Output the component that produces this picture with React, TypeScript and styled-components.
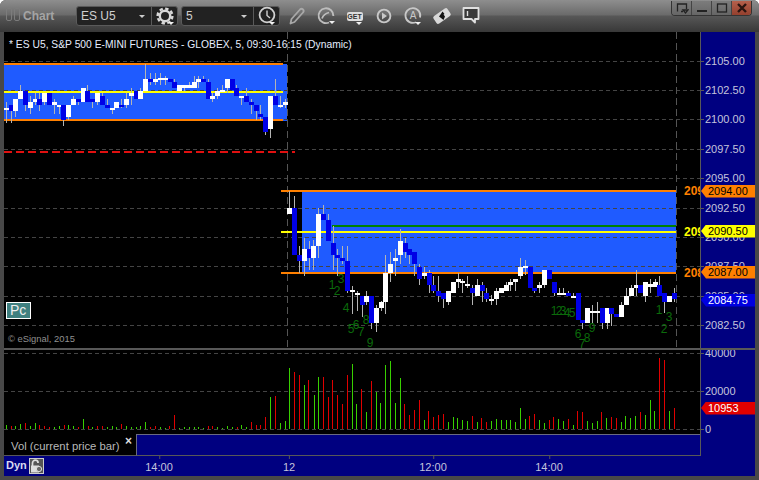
import React from 'react';
import styled, { createGlobalStyle } from 'styled-components';

const GlobalStyle = createGlobalStyle`
  html, body { margin: 0; padding: 0; background: #fff; }
  body { font-family: "Liberation Sans", Arial, sans-serif; }
`;

// [x, bodyTop, bodyBottom, wickTop, wickBottom, up] sampled at 3x from the chart
type Bar = [number, number, number, number, number, number];

const SESSION_1: Bar[] = [
  [18,158,165,140,203,1],[32,150,168,150,203,0],[46,132,168,132,185,1],[61,108,132,90,132,1],[76,108,150,108,168,0],
  [91,141,159,123,177,1],[104,132,141,113,150,1],[118,132,150,113,168,0],[133,114,141,114,150,1],[148,114,150,114,150,0],
  [163,141,150,132,177,1],[176,150,155,150,177,1],[190,150,195,150,212,0],[205,150,186,150,195,1],[220,132,150,123,150,1],
  [234,132,141,132,150,0],[248,99,141,99,141,1],[262,108,141,90,141,0],[277,132,141,132,159,0],[292,114,141,114,150,1],
  [307,123,150,114,150,0],[322,150,159,132,159,0],[335,159,164,159,177,1],[349,141,159,141,159,1],[364,150,152,132,159,0],
  [379,132,150,114,159,1],[393,114,123,99,150,1],[407,108,132,108,132,0],[421,108,132,99,132,1],[436,72,108,28,108,1],
  [451,72,81,54,90,0],[465,72,81,54,90,1],[479,69,75,54,90,1],[494,69,75,63,90,1],[509,72,81,72,81,0],
  [523,81,99,72,99,0],[538,90,108,90,108,1],[552,90,99,90,108,1],[567,90,99,81,99,1],[581,81,99,63,99,1],
  [595,72,81,63,99,1],[610,72,81,63,81,0],[623,81,132,72,132,0],[637,123,132,114,141,1],[652,108,123,99,132,1],
  [667,105,110,90,110,1],[681,72,99,72,114,1],[695,72,105,72,105,0],[709,99,123,90,123,0],[724,123,129,123,150,1],
  [739,123,141,99,141,0],[754,141,150,132,177,0],[767,150,168,150,195,0],[781,177,186,150,195,0],[796,186,231,186,240,0],
  [811,123,222,123,249,1],[826,123,150,72,150,0],[841,150,156,123,159,1],[854,141,150,132,159,1],
];

const SESSION_2: Bar[] = [
  [28,84,102,33,102,1],[43,84,225,48,225,0],[58,225,243,198,279,0],[72,207,243,174,288,1],[86,207,234,183,270,0],
  [100,198,234,180,270,1],[115,102,198,84,234,1],[130,102,120,75,120,0],[145,120,183,102,183,0],[158,189,225,138,270,0],
  [172,225,234,207,288,0],[187,234,243,198,252,0],[202,243,333,198,339,0],[217,330,335,318,402,1],[230,339,345,333,393,1],
  [245,348,375,348,411,0],[259,348,366,333,375,1],[274,348,429,348,447,0],[289,384,429,375,456,1],[302,366,384,363,393,1],
  [316,279,366,225,402,1],[331,252,279,216,306,1],[346,234,243,207,288,1],[361,183,225,147,252,1],[374,189,216,174,234,0],
  [388,207,225,207,252,0],[403,216,252,216,288,0],[418,261,297,252,315,0],[432,279,288,261,297,1],[446,279,315,270,339,0],
  [460,315,333,288,339,0],[475,333,348,288,366,0],[490,339,357,339,384,0],[505,333,366,333,375,1],[520,306,339,306,339,1],
  [533,297,306,279,324,1],[547,303,309,297,339,1],[562,312,318,288,324,1],[577,324,339,315,375,0],[591,315,348,297,348,1],
  [605,315,333,306,366,0],[619,339,357,324,366,0],[634,357,362,345,375,1],[649,333,357,324,375,1],[663,324,339,324,339,1],
  [677,315,333,306,333,1],[691,306,315,297,333,1],[706,297,306,297,333,1],
];

const SESSION_3: Bar[] = [
  [31,261,288,234,297,1],[45,258,264,240,285,1],[59,261,324,261,324,0],[73,324,333,324,339,0],[88,315,324,306,339,1],
  [103,270,315,270,324,1],[118,270,297,270,297,0],[131,306,339,306,348,0],[146,339,345,324,345,1],[160,339,345,324,345,1],
  [175,339,347,333,347,0],[189,348,354,340,354,1],[203,339,420,339,420,0],[217,420,429,420,447,0],[232,384,429,384,429,1],
  [247,393,400,375,429,1],[262,393,400,366,429,1],[275,384,429,384,447,0],[290,384,429,384,447,1],[304,384,402,384,438,0],
  [319,402,411,402,411,0],[334,375,411,366,411,1],[347,348,375,325,375,1],[362,324,348,315,348,1],[377,315,324,270,348,1],
  [391,315,339,315,339,0],[406,306,348,306,366,1],[420,312,322,297,339,1],[434,306,322,297,322,1],[448,315,348,288,348,0],
  [463,339,366,339,400,0],[478,348,366,348,366,1],[493,339,357,324,366,0],
];

// [x, top] at 3x, baseline is 252, g is an up bar
const VOLUME: [number, number, 'g' | 'r'][] = [
  [19,240,'g'],[32,243,'r'],[46,243,'g'],[61,237,'g'],[76,234,'r'],[90,243,'g'],[104,234,'g'],[118,240,'r'],[133,243,'r'],[148,246,'r'],
  [163,246,'g'],[177,243,'g'],[191,240,'r'],[205,240,'g'],[220,243,'g'],[235,246,'r'],[248,222,'g'],[263,243,'r'],[277,246,'g'],[292,243,'r'],
  [307,243,'r'],[321,246,'g'],[335,243,'g'],[349,246,'g'],[364,237,'r'],[379,243,'g'],[393,246,'g'],[407,246,'g'],[421,243,'g'],[436,231,'g'],
  [451,246,'r'],[465,243,'r'],[479,246,'g'],[494,249,'g'],[508,243,'r'],[523,210,'r'],[538,249,'g'],[552,246,'g'],[566,246,'g'],[581,246,'g'],
  [595,246,'g'],[609,249,'g'],[623,243,'r'],[637,243,'r'],[652,246,'g'],[667,249,'g'],[682,243,'g'],[696,246,'g'],[710,246,'r'],[724,240,'g'],
  [739,246,'g'],[754,231,'r'],[767,240,'r'],[781,240,'r'],[796,216,'r'],[811,156,'g'],[826,153,'r'],[841,234,'g'],[854,228,'g'],[868,69,'g'],
  [883,81,'r'],[898,90,'r'],[913,120,'g'],[925,105,'r'],[941,150,'g'],[955,96,'g'],[970,96,'r'],[985,156,'r'],[997,105,'r'],[1012,150,'r'],
  [1027,177,'r'],[1042,90,'r'],[1056,57,'g'],[1069,177,'g'],[1084,132,'r'],[1099,201,'g'],[1114,108,'r'],[1129,141,'g'],
  [1141,174,'g'],[1156,60,'g'],[1171,48,'g'],[1186,174,'g'],[1201,99,'g'],[1213,177,'r'],[1228,210,'r'],[1243,195,'r'],[1258,165,'r'],[1273,225,'g'],
  [1285,198,'r'],[1300,216,'r'],[1315,210,'r'],[1330,207,'r'],[1345,231,'g'],[1360,216,'g'],[1372,219,'g'],[1387,225,'g'],[1402,228,'g'],[1417,213,'r'],
  [1432,231,'g'],[1444,219,'r'],[1459,231,'r'],[1474,228,'g'],[1489,222,'g'],[1504,225,'g'],[1517,225,'g'],[1531,225,'g'],[1546,231,'g'],[1561,189,'g'],
  [1576,222,'g'],[1588,213,'r'],[1603,207,'r'],[1618,225,'g'],[1633,234,'g'],[1648,225,'r'],[1660,216,'r'],[1675,222,'g'],[1690,228,'g'],[1705,222,'r'],
  [1720,240,'g'],[1732,198,'r'],[1747,201,'r'],[1762,228,'g'],[1777,234,'g'],[1792,228,'g'],[1804,201,'r'],[1819,219,'g'],[1834,216,'r'],[1849,219,'r'],
  [1864,231,'g'],[1876,213,'g'],[1891,219,'g'],[1906,213,'g'],[1921,201,'r'],[1936,210,'g'],[1951,165,'g'],[1963,198,'g'],[1978,39,'r'],[1993,45,'r'],
  [2008,198,'g'],[2023,189,'r'],
];

// sequence counts printed under the bars, page coordinates
const COUNTS: [string, number, number][] = [
  ['1',332,285],['2',337,291],['3',341,279],['4',346,308],['5',351,329],['6',356,325],['7',361,332],['8',366,320],['9',370,343],
  ['1',554,311],['2',559,311],['3',563,311],['4',567,313],['5',572,313],['6',578,334],['7',582,344],['8',587,338],['9',592,328],
  ['1',659,310],['3',669,317],['2',664,329],
];

const GRID_Y = [61, 90, 119, 149, 178, 208, 237, 266, 296, 325];
const PRICES = ['2105.00','2102.50','2100.00','2097.50','2095.00','2092.50','2090.00','2087.50','2085.00','2082.50'];
const BADGES = [
  { y: 191, text: '2094.00', bg: '#ff8000', fg: '#000' },
  { y: 231, text: '2090.50', bg: '#ffff00', fg: '#000' },
  { y: 272, text: '2087.00', bg: '#ff8000', fg: '#000' },
  { y: 300, text: '2084.75', bg: '#0000e0', fg: '#fff' },
];
const PRICE_TOP = 32;
const VOLUME_TOP = 350;

const Candles = ({ bars, ox, oy }: { bars: Bar[]; ox: number; oy: number }) => (
  <>
    {bars.map(([x, top, bottom, wickTop, wickBottom, up]) => {
      const cx = Math.round(ox + x / 3);
      const by = Math.round(oy + top / 3);
      return (
        <g key={x}>
          <rect x={cx} y={oy + wickTop / 3} width={1} height={(wickBottom - wickTop) / 3} fill="#b4b4b4" />
          <rect x={cx - 2} y={by} width={5} height={Math.max(2, Math.round(oy + bottom / 3) - by)} fill={up ? '#fff' : '#0000e6'} />
        </g>
      );
    })}
  </>
);

const PriceChart = () => (
  <ChartSvg viewBox="4 32 696 316" shapeRendering="crispEdges">
    <rect x={4} y={64} width={283} height={57} fill="#1f5bff" />
    <rect x={302} y={192} width={374} height={80} fill="#1f5bff" />
    {GRID_Y.map((y) => (
      <line key={y} x1={4} x2={700} y1={y + 0.5} y2={y + 0.5} stroke="#444" strokeDasharray="4 3" />
    ))}
    <line x1={287.5} x2={287.5} y1={32} y2={348} stroke="#555" strokeDasharray="7 4" />
    <line x1={676.5} x2={676.5} y1={32} y2={348} stroke="#555" strokeDasharray="7 4" />
    <rect x={4} y={63} width={279} height={2} fill="#ff8000" />
    <rect x={4} y={91} width={279} height={2} fill="#ffff00" />
    <rect x={4} y={119} width={279} height={2} fill="#ff8000" />
    <line x1={4} x2={295} y1={152} y2={152} stroke="#e01010" strokeWidth={2} strokeDasharray="8 4" />
    <rect x={281} y={190} width={395} height={2} fill="#ff8000" />
    <rect x={332} y={225} width={344} height={2} fill="#008000" />
    <rect x={281} y={231} width={395} height={2} fill="#ffff00" />
    <rect x={281} y={272} width={395} height={2} fill="#ff8000" />
    <Candles bars={SESSION_1} ox={0} oy={55} />
    <Candles bars={SESSION_2} ox={280} oy={180} />
    <Candles bars={SESSION_3} ox={510} oy={180} />
    {COUNTS.map(([n, x, y], i) => (
      <CountText key={i} x={x} y={y}>{n}</CountText>
    ))}
    <LevelText x={684} y={195} fill="#ff8000">209</LevelText>
    <LevelText x={684} y={236} fill="#ffff00">209</LevelText>
    <LevelText x={684} y={277} fill="#ff8000">208</LevelText>
  </ChartSvg>
);

const VolumeChart = () => (
  <ChartSvg viewBox="4 350 696 84" shapeRendering="crispEdges">
    {[353, 391, 429].map((y) => (
      <line key={y} x1={4} x2={700} y1={y + 0.5} y2={y + 0.5} stroke="#444" strokeDasharray="4 3" />
    ))}
    {VOLUME.map(([x, top, c]) => {
      const y = Math.round(345 + top / 3);
      return <rect key={x} x={Math.round(x / 3)} y={y} width={1} height={429 - y} fill={c === 'g' ? '#38d000' : '#e00000'} />;
    })}
  </ChartSvg>
);

const Caret = () => <path d="M0 0h6l-3 3z" fill="#f0f0f0" />;

const GearIcon = () => (
  <ToolSvg width={22} height={22} viewBox="0 0 22 22">
    <circle cx={11} cy={11} r={7.4} fill="none" stroke="#d8d8d8" strokeWidth={2.4} strokeDasharray="3.4 2.4" />
    <circle cx={11} cy={11} r={5.2} fill="none" stroke="#d8d8d8" strokeWidth={2.4} />
    <g transform="translate(14 17)"><Caret /></g>
  </ToolSvg>
);

const ClockIcon = () => (
  <ToolSvg width={22} height={22} viewBox="0 0 22 22">
    <circle cx={11} cy={10} r={7.4} fill="none" stroke="#d0d0d0" strokeWidth={1.8} />
    <path d="M11 5.5V10.5l3 2.5" fill="none" stroke="#d0d0d0" strokeWidth={1.4} />
    <g transform="translate(13 17)"><Caret /></g>
  </ToolSvg>
);

const PencilIcon = () => (
  <ToolSvg width={20} height={22} viewBox="0 0 20 22">
    <path d="M3.5 18.5l1-4.5L13 4.5c1-1 2-1 3 0s1 2 0 3L7.5 17z" fill="none" stroke="#a8a8a8" strokeWidth={1.8} strokeLinejoin="round" />
  </ToolSvg>
);

const GaugeIcon = () => (
  <ToolSvg width={22} height={22} viewBox="0 0 22 22">
    <path d="M14 17.5A7.4 7.4 0 1 1 18.4 11" fill="none" stroke="#bdbdbd" strokeWidth={1.9} />
    <path d="M7 13.5c1-3 3-5 7-6" fill="none" stroke="#bdbdbd" strokeWidth={1.8} />
    <g transform="translate(14 16)"><Caret /></g>
  </ToolSvg>
);

const GetIcon = () => (
  <GetBox>
    GET
    <svg width={6} height={3} viewBox="0 0 6 3"><Caret /></svg>
  </GetBox>
);

const PlayIcon = () => (
  <ToolSvg width={20} height={22} viewBox="0 0 20 22">
    <circle cx={10} cy={11} r={6.4} fill="none" stroke="#c8c8c8" strokeWidth={1.9} />
    <path d="M8 7.5l5 3.5-5 3.5z" fill="#c8c8c8" />
  </ToolSvg>
);

const AutoIcon = () => (
  <ToolSvg width={22} height={22} viewBox="0 0 22 22">
    <path d="M14 17.2A7.4 7.4 0 1 1 18 12.5" fill="none" stroke="#c8c8c8" strokeWidth={1.8} />
    <IconLetter x={11} y={14}>A</IconLetter>
    <g transform="translate(13 17)"><Caret /></g>
  </ToolSvg>
);

const DiamondIcon = () => (
  <ToolSvg width={20} height={22} viewBox="0 0 20 22">
    <rect x={1.5} y={6.5} width={17} height={9} rx={2} fill="#d8d8d8" transform="rotate(-35 10 11)" />
    <path d="M10.5 6.5l2 2.5-1 .5 1.5 2-1.5 3.5-2.5-2-2-1.5L8.5 9.5z" fill="#111" />
  </ToolSvg>
);

const BubbleIcon = () => (
  <ToolSvg width={18} height={20} viewBox="0 0 18 20">
    <path d="M1.5 2h15v11h-3.5v3.5l-3.5-3.5h-8z" fill="#3a3a3a" stroke="#e0e0e0" strokeWidth={1.8} strokeLinejoin="round" />
    <path d="M5.5 5v5" stroke="#e0e0e0" strokeWidth={1.4} />
  </ToolSvg>
);

const LockIcon = () => (
  <svg width={13} height={14} viewBox="0 0 13 14">
    <path d="M2.5 7V4a2.8 2.8 0 0 1 5.6 0" fill="none" stroke="#ddd" strokeWidth={1.7} />
    <rect x={1} y={6.5} width={8} height={7} fill="#ddd" />
    <circle cx={9} cy={10} r={2.6} fill="#666" stroke="#ddd" />
  </svg>
);

const TOOLS = [PencilIcon, GaugeIcon, GetIcon, PlayIcon, AutoIcon, DiamondIcon, BubbleIcon];

const App = () => (
  <Window>
    <GlobalStyle />
    <TitleBar>
      <Grip><GripBar /><GripBar /></Grip>
      <ChartName>Chart</ChartName>
      <Selector>
        <SelectorValue $width={75}>ES U5<SelectCaret /></SelectorValue>
        <SelectorButton><GearIcon /></SelectorButton>
      </Selector>
      <Selector>
        <SelectorValue $width={72}>5<SelectCaret /></SelectorValue>
        <SelectorButton><ClockIcon /></SelectorButton>
      </Selector>
      <ToolGroup>
        {TOOLS.map((Tool, i) => (
          <ToolSlot key={i}><Tool /></ToolSlot>
        ))}
      </ToolGroup>
      <WindowButtons>
        <WindowButton>
          <svg width={14} height={12} viewBox="0 0 14 12"><path d="M2.5 9.5V2h9v5M6 9.5h2M8 8h5l-2.5 3z" fill="none" stroke="#222" strokeWidth={1.3} /></svg>
        </WindowButton>
        <WindowButton>
          <svg width={12} height={12} viewBox="0 0 12 12"><rect x={1} y={8} width={10} height={2} fill="#222" /></svg>
        </WindowButton>
        <WindowButton>
          <svg width={12} height={12} viewBox="0 0 12 12"><rect x={1.5} y={2} width={9} height={8} fill="none" stroke="#222" strokeWidth={1.3} /></svg>
        </WindowButton>
        <CloseButton>
          <svg width={12} height={12} viewBox="0 0 12 12"><path d="M2 2l8 8M10 2l-8 8" stroke="#2a1410" strokeWidth={2.4} /></svg>
        </CloseButton>
      </WindowButtons>
    </TitleBar>

    <PriceRow>
      <Plot>
        <PriceChart />
        <ChartTitle>* ES U5, S&amp;P 500 E-MINI FUTURES - GLOBEX, 5, 09:30-16:15 (Dynamic)</ChartTitle>
        <PcBadge>Pc</PcBadge>
        <Copyright>© eSignal, 2015</Copyright>
      </Plot>
      <Axis>
        {PRICES.map((p, i) => (
          <AxisLabel key={p} $y={GRID_Y[i] - PRICE_TOP}>{p}</AxisLabel>
        ))}
        {BADGES.map((b) => (
          <PriceBadge key={b.text} $y={b.y - PRICE_TOP} $bg={b.bg} $fg={b.fg}>{b.text}</PriceBadge>
        ))}
      </Axis>
    </PriceRow>

    <VolumeRow>
      <Plot>
        <VolumeChart />
      </Plot>
      <Axis>
        <AxisLabel $y={353 - VOLUME_TOP}>40000</AxisLabel>
        <AxisLabel $y={391 - VOLUME_TOP}>20000</AxisLabel>
        <AxisLabel $y={429 - VOLUME_TOP}>0</AxisLabel>
        <PriceBadge $y={408 - VOLUME_TOP} $bg="#e00000" $fg="#fff">10953</PriceBadge>
      </Axis>
    </VolumeRow>

    <LegendRow>
      <LegendTab>
        Vol (current price bar)
        <LegendClose>×</LegendClose>
      </LegendTab>
      <LegendFill />
      <AxisSpacer />
    </LegendRow>

    <TimeRow>
      <DynLabel>Dyn</DynLabel>
      <LockButton><LockIcon /></LockButton>
      {[['14:00', 159], ['12', 289], ['12:00', 433], ['14:00', 549]].map(([t, x]) => (
        <TimeLabel key={x} $x={Number(x) - 4}>{t}</TimeLabel>
      ))}
    </TimeRow>
  </Window>
);

export default App;

const Window = styled.div`
  width: 759px;
  height: 480px;
  box-sizing: border-box;
  padding: 0 4px 4px;
  display: flex;
  flex-direction: column;
  overflow: hidden;
  background: #484848;
  border-radius: 6px 6px 0 0;
  font-size: 11px;
  color: #c4c4dc;
`;

const TitleBar = styled.div`
  height: 32px;
  flex: none;
  margin: 0 -4px;
  padding: 6px 0 0 6px;
  box-sizing: border-box;
  display: flex;
  align-items: flex-start;
  position: relative;
  background: linear-gradient(#8e8e8e 0, #6a6a6a 15px, #575757 16px, #383838 32px);
`;

const Grip = styled.div`
  display: flex;
  gap: 2px;
  margin-top: 2px;
`;

const GripBar = styled.div`
  width: 6px;
  height: 13px;
  box-sizing: border-box;
  border: 1px solid #7c7c7c;
  border-radius: 2px;
`;

const ChartName = styled.div`
  width: 56px;
  padding: 3px 0 0 3px;
  box-sizing: border-box;
  font-size: 12px;
  font-weight: bold;
  color: #a4a4a4;
`;

const Selector = styled.div`
  height: 20px;
  display: flex;
  margin-right: 3px;
  box-sizing: border-box;
  border: 1px solid #5a5a5a;
  border-radius: 3px;
  background: #222;

  & + & {
    margin-right: 2px;
  }
`;

const SelectorValue = styled.div<{ $width: number }>`
  width: ${(p) => p.$width}px;
  box-sizing: border-box;
  padding-left: 4px;
  display: flex;
  align-items: center;
  justify-content: space-between;
  font-size: 12px;
  color: #d0d0d0;
  border-right: 1px solid #5a5a5a;
`;

const SelectCaret = styled.span`
  width: 0;
  height: 0;
  margin-right: 6px;
  border: 3px solid transparent;
  border-top: 3px solid #ccc;
  border-bottom: 0;
`;

const SelectorButton = styled.div`
  width: 25px;
  display: flex;
  align-items: center;
  justify-content: center;
`;

const ToolSvg = styled.svg`
  display: block;
  flex: none;
`;

const ToolGroup = styled.div`
  display: flex;
  margin-top: -1px;
  height: 22px;
`;

const ToolSlot = styled.div`
  width: 29px;
  display: flex;
  align-items: center;
  justify-content: center;
`;

const GetBox = styled.div`
  width: 16px;
  height: 9px;
  position: relative;
  display: flex;
  justify-content: center;
  border-radius: 2px;
  background: #ddd;
  color: #333;
  font: bold 7px/9px "Liberation Sans", sans-serif;

  svg {
    position: absolute;
    right: 1px;
    bottom: -4px;
  }
`;

const IconLetter = styled.text`
  font-size: 10px;
  fill: #c8c8c8;
  text-anchor: middle;
`;

const WindowButtons = styled.div`
  position: absolute;
  top: 1px;
  right: 7px;
  display: flex;
  height: 14px;
  border: 1px solid #333;
  border-top: 0;
  border-radius: 0 0 4px 4px;
  overflow: hidden;
  background: #777;
`;

const WindowButton = styled.div`
  width: 19px;
  display: flex;
  align-items: center;
  justify-content: center;
  border-right: 1px solid #444;
  background: linear-gradient(#7c7c7c, #666);
`;

const CloseButton = styled(WindowButton)`
  border-right: 0;
  background: linear-gradient(#b5604c, #94402e);
`;

const PriceRow = styled.div`
  height: 318px;
  flex: none;
  display: flex;
  box-sizing: border-box;
  border-bottom: 2px solid #585858;
`;

const VolumeRow = styled.div`
  height: 84px;
  flex: none;
  display: flex;
`;

const Plot = styled.div`
  width: 696px;
  flex: none;
  position: relative;
  background: #000;
`;

const ChartSvg = styled.svg`
  display: block;
  width: 100%;
  height: 100%;
`;

const CountText = styled.text`
  font-size: 12px;
  fill: #0b6b0b;
  text-anchor: middle;
  dominant-baseline: central;
`;

const LevelText = styled.text`
  font-size: 12px;
  font-weight: bold;
`;

const ChartTitle = styled.div`
  position: absolute;
  top: 6px;
  left: 5px;
  font-size: 10.3px;
  line-height: 13px;
  white-space: nowrap;
  color: #e6eeff;
`;

const PcBadge = styled.div`
  position: absolute;
  top: 270px;
  left: 2px;
  width: 25px;
  height: 17px;
  box-sizing: border-box;
  border: 1px solid #fff;
  background: #3f8080;
  color: #eee;
  font-size: 14px;
  line-height: 15px;
  padding-left: 3px;
`;

const Copyright = styled.div`
  position: absolute;
  top: 301px;
  left: 4px;
  font-size: 9.4px;
  line-height: 12px;
  color: #909090;
`;

const Axis = styled.div`
  flex: 1;
  position: relative;
  overflow: hidden;
  box-sizing: border-box;
  background: #000080;
  border-left: 1px solid #585858;
`;

const AxisLabel = styled.div<{ $y: number }>`
  position: absolute;
  top: ${(p) => p.$y - 7}px;
  left: 4px;
  line-height: 14px;
  font-size: 11px;
  color: #c4c4dc;

  &::before {
    content: '';
    position: absolute;
    top: 7px;
    left: -4px;
    width: 3px;
    height: 1px;
    background: #585858;
  }
`;

const PriceBadge = styled.div<{ $y: number; $bg: string; $fg: string }>`
  position: absolute;
  top: ${(p) => p.$y - 6.5}px;
  left: 0;
  width: 54px;
  height: 13px;
  box-sizing: border-box;
  padding-left: 7px;
  line-height: 13px;
  font-size: 11px;
  background: ${(p) => p.$bg};
  color: ${(p) => p.$fg};
  clip-path: polygon(0 50%, 5px 0, 100% 0, 100% 100%, 5px 100%);
`;

const LegendRow = styled.div`
  height: 22px;
  flex: none;
  display: flex;
`;

const LegendTab = styled.div`
  width: 132px;
  flex: none;
  position: relative;
  box-sizing: border-box;
  padding: 5px 0 0 7px;
  line-height: 14px;
  font-size: 11.3px;
  background: #000;
  color: #b8b8b8;
  border-bottom: 1px solid #585858;
`;

const LegendClose = styled.span`
  position: absolute;
  top: 0;
  right: 4px;
  font-size: 12px;
  font-weight: bold;
  color: #ddd;
`;

const LegendFill = styled.div`
  width: 564px;
  flex: none;
  box-sizing: border-box;
  background: #000080;
  border-top: 1px solid #6a6a80;
  border-left: 1px solid #6a6a80;
  border-bottom: 1px solid #585858;
`;

const AxisSpacer = styled.div`
  flex: 1;
  background: #000080;
  border-left: 1px solid #585858;
`;

const TimeRow = styled.div`
  height: 20px;
  flex: none;
  position: relative;
  display: flex;
  align-items: flex-start;
  background: #000080;
`;

const DynLabel = styled.div`
  width: 25px;
  box-sizing: border-box;
  padding: 2px 0 0 2px;
  font-size: 11px;
  line-height: 14px;
  font-weight: bold;
  color: #d8d8f0;
`;

const LockButton = styled.div`
  width: 15px;
  height: 16px;
  margin-top: 2px;
  box-sizing: border-box;
  border: 1px solid #ccc;
  background: #555;
  display: flex;
  align-items: center;
  justify-content: center;
`;

const TimeLabel = styled.div<{ $x: number }>`
  position: absolute;
  left: ${(p) => p.$x}px;
  top: 4px;
  transform: translateX(-50%);
  font-size: 11px;
  line-height: 14px;
  color: #c4c4dc;

  &::before {
    content: '';
    position: absolute;
    top: -4px;
    left: 50%;
    width: 1px;
    height: 3px;
    background: #585858;
  }
`;
